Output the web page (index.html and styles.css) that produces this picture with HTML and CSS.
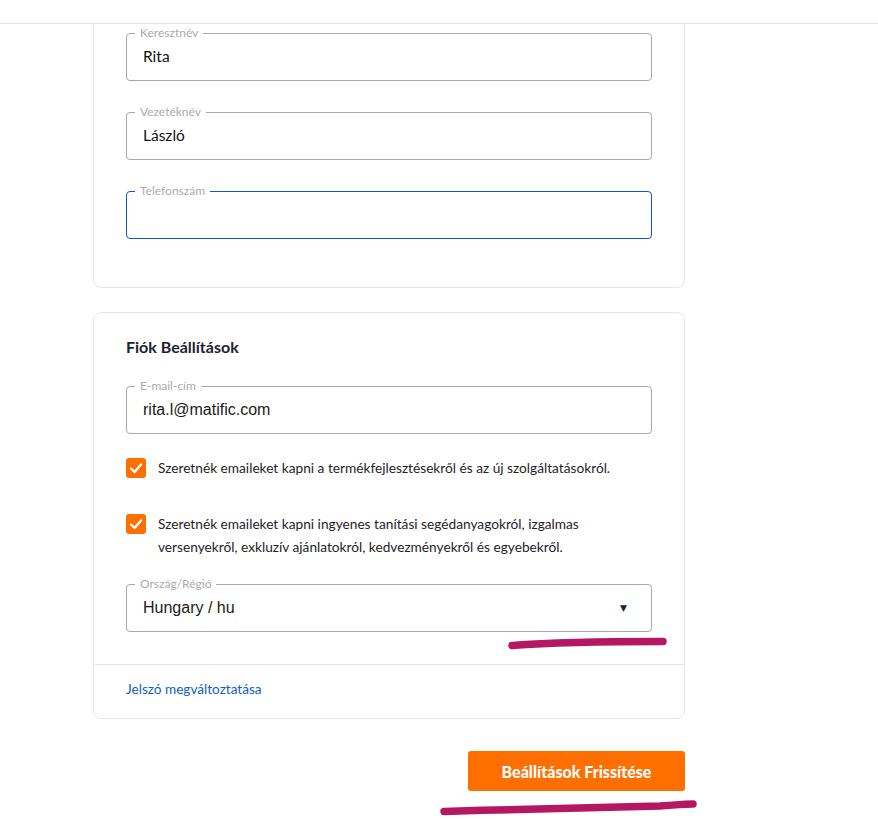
FILE: index.html
```html
<!DOCTYPE html>
<html lang="hu">
<head>
    <meta charset="UTF-8" />
    <meta name="viewport" content="width=device-width, initial-scale=1" />
    <title>Fiók Beállítások</title>
    <link rel="stylesheet" href="styles.css">
</head>
<body>
    <header class="topbar"></header>

    <main class="page">
        <section class="card card-top">
            <div class="field">
                <span class="field-label">Keresztnév</span>
                <span class="field-value">Rita</span>
            </div>
            <div class="field">
                <span class="field-label">Vezetéknév</span>
                <span class="field-value">László</span>
            </div>
            <div class="field field-focus">
                <span class="field-label">Telefonszám</span>
                <span class="field-value"></span>
            </div>
        </section>

        <section class="card">
            <div class="card-body">
                <h2 class="card-title">Fiók Beállítások</h2>

                <div class="field field-email">
                    <span class="field-label">E-mail-cím</span>
                    <span class="field-value value-plain">rita.l@matific.com</span>
                </div>

                <label class="check check-first">
                    <span class="check-box">
                        <svg viewBox="0 0 20 20" width="20" height="20"><polyline points="5,10.5 8.6,14 15,6.5" /></svg>
                    </span>
                    <span class="check-text">Szeretnék emaileket kapni a termékfejlesztésekről és az új szolgáltatásokról.</span>
                </label>

                <label class="check">
                    <span class="check-box">
                        <svg viewBox="0 0 20 20" width="20" height="20"><polyline points="5,10.5 8.6,14 15,6.5" /></svg>
                    </span>
                    <span class="check-text">Szeretnék emaileket kapni ingyenes tanítási segédanyagokról, izgalmas versenyekről, exkluzív ajánlatokról, kedvezményekről és egyebekről.</span>
                </label>

                <div class="field field-select">
                    <span class="field-label">Ország/Régió</span>
                    <span class="field-value value-plain">Hungary / hu</span>
                    <span class="select-arrow">&#9660;</span>
                </div>
            </div>
            <div class="card-footer">
                <a href="#" class="link">Jelszó megváltoztatása</a>
            </div>
        </section>

        <div class="actions">
            <button class="btn-primary">Beállítások Frissítése</button>
        </div>
    </main>

    <!-- marker annotations drawn over the screenshot -->
    <svg class="scribble" width="878" height="819" viewBox="0 0 878 819">
        <path d="M512 645.5 C 545 643, 590 641.5, 663 641.5" />
        <path d="M444 811.5 C 520 809, 600 808, 660 806 C 675 805, 685 804, 693 804" />
    </svg>
</body>
</html>
```

FILE: styles.css
```css
body {
    margin: 0;
    font-family: Lato, "Open Sans", sans-serif;
    background: #fff;
    color: #1b2330;
    position: relative;
    min-height: 819px;
    overflow: hidden;
}
.topbar {
    height: 23px;
    border-bottom: 1px solid #e4e6e8;
}
.page {
    width: 592px;
    margin-left: 93px;
}
.card {
    border: 1px solid #e3e7ec;
    border-radius: 8px;
    background: #fff;
    margin-top: 24px;
}
.card-top {
    margin-top: 0;
    border-top: none;
    border-radius: 0 0 8px 8px;
    padding: 9px 32px 48px;
}
.card-body {
    padding: 24px 32px 32px;
}
.card-title {
    margin: 0 0 29px;
    font-size: 16px;
    line-height: 20px;
    font-weight: 700;
    color: #1b2330;
}
.field {
    position: relative;
    box-sizing: border-box;
    height: 48px;
    border: 1px solid #a4a8ac;
    border-radius: 4px;
    display: flex;
    align-items: center;
    padding: 0 16px;
}
.field + .field {
    margin-top: 31px;
}
.field-focus {
    border-color: #0a56c2;
}
.field-label {
    position: absolute;
    top: -8px;
    left: 8px;
    padding: 0 5px;
    background: #fff;
    font-size: 12px;
    line-height: 14px;
    color: #a9abae;
}
.field-value {
    font-size: 15.5px;
    color: #111;
    margin-top: -2px;
}
.value-plain {
    font-family: "Liberation Sans", Arial, sans-serif;
    font-size: 16px;
    color: #1a1a1a;
    margin-top: 0;
}
.field-select {
    margin-top: 26px;
    justify-content: space-between;
    padding-right: 24px;
}
.select-arrow {
    font-size: 9px;
    color: #1b2330;
    font-family: "DejaVu Sans", sans-serif;
}
.check {
    display: flex;
    align-items: flex-start;
    gap: 12px;
    margin-top: 33px;
    cursor: pointer;
}
.check-first {
    margin-top: 22px;
}
.check-box {
    flex: none;
    width: 20px;
    height: 20px;
    margin-top: 2px;
    border-radius: 3px;
    background: #ff6f00;
}
.check-box svg {
    display: block;
}
.check-box polyline {
    fill: none;
    stroke: #fff;
    stroke-width: 2.4;
    stroke-linecap: round;
    stroke-linejoin: round;
}
.check-text {
    font-size: 13.7px;
    line-height: 23px;
    color: #1f2329;
    max-width: 470px;
}
.card-footer {
    border-top: 1px solid #e3e7ec;
    padding: 13px 32px 19px;
    line-height: 20px;
}
.link {
    font-size: 13.6px;
    color: #0f5fc4;
    text-decoration: none;
}
.actions {
    display: flex;
    justify-content: flex-end;
    margin-top: 32px;
}
.btn-primary {
    width: 217px;
    height: 40px;
    border: none;
    border-radius: 3px;
    background: #ff6f00;
    color: #fff;
    font-family: Lato, sans-serif;
    font-weight: 900;
    font-size: 16px;
    cursor: pointer;
}
.btn-primary:hover {
    background: #f06400;
}
.scribble {
    position: absolute;
    top: 0;
    left: 0;
    pointer-events: none;
}
.scribble path {
    fill: none;
    stroke: #b51763;
    stroke-width: 7.5;
    stroke-linecap: round;
}
```
